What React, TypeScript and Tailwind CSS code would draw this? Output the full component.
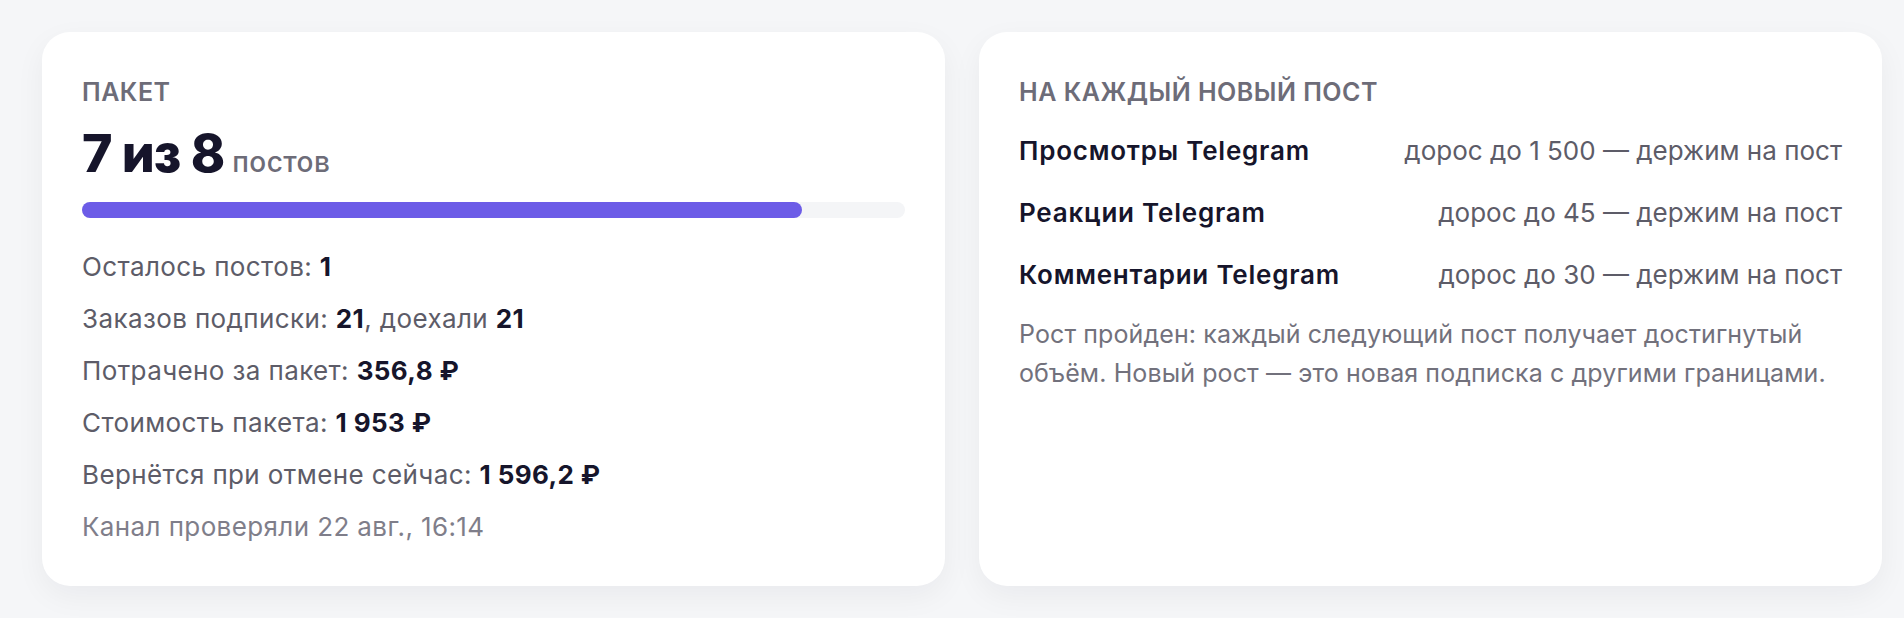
const stats = [
  { label: 'Осталось постов: ', value: '1' },
  { label: 'Заказов подписки: ', value: '21', extra: ', доехали ', extraValue: '21' },
  { label: 'Потрачено за пакет: ', value: '356,8 ₽' },
  { label: 'Стоимость пакета: ', value: '1 953 ₽' },
  { label: 'Вернётся при отмене сейчас: ', value: '1 596,2 ₽' },
]

const perPost = [
  { name: 'Просмотры Telegram', note: 'дорос до 1 500 — держим на пост' },
  { name: 'Реакции Telegram', note: 'дорос до 45 — держим на пост' },
  { name: 'Комментарии Telegram', note: 'дорос до 30 — держим на пост' },
]

export default function App() {
  const used = 7
  const total = 8

  return (
    <div
      className="min-h-[618px] bg-[#f5f6f8] pt-[32px] pl-[42px] pr-[22px] text-[#16152b]"
      style={{ fontFamily: 'Inter, "Noto Sans", sans-serif' }}
    >
      <div className="grid grid-cols-2 gap-[34px]">
        {/* Package card */}
        <div className="h-[554px] rounded-[28px] bg-white px-[40px] pt-[44px] shadow-[0_10px_30px_rgba(20,24,40,0.05)]">
          <div className="text-[25px] leading-[32px] font-semibold tracking-[0.02em] text-[#6d6c78]">ПАКЕТ</div>
          <div className="mt-[16px] flex items-baseline gap-[8px]">
            <span className="text-[52px] leading-[60px] font-extrabold tracking-[-0.02em]">
              {used} из {total}
            </span>
            <span className="text-[28px] font-medium tracking-[0.015em] text-[#6d6c78]">постов</span>
          </div>
          <div className="mt-[18px] h-[16px] rounded-full bg-[#f4f5f7]">
            <div
              className="h-full rounded-full bg-[#6c5ce7]"
              style={{ width: `${(used / total) * 100}%` }}
            />
          </div>
          <div className="mt-[29px] flex flex-col gap-[12px] text-[26px] leading-[40px] tracking-[0.015em] text-[#5d5c68]">
            {stats.map((s) => (
              <div key={s.label}>
                {s.label}
                <span className="font-bold text-[#16152b]">{s.value}</span>
                {s.extra}
                {s.extraValue && <span className="font-bold text-[#16152b]">{s.extraValue}</span>}
              </div>
            ))}
            <div className="text-[#7f7e8a]">Канал проверяли 22 авг., 16:14</div>
          </div>
        </div>

        {/* Per-post card */}
        <div className="h-[554px] rounded-[28px] bg-white px-[40px] pt-[44px] shadow-[0_10px_30px_rgba(20,24,40,0.05)]">
          <div className="text-[25px] leading-[32px] font-semibold tracking-[0.02em] text-[#6d6c78]">
            НА КАЖДЫЙ НОВЫЙ ПОСТ
          </div>
          <div className="mt-[23px] flex flex-col gap-[22px]">
            {perPost.map((p) => (
              <div key={p.name} className="flex items-baseline justify-between text-[26px] leading-[40px]">
                <span className="font-semibold tracking-[0.03em]">{p.name}</span>
                <span className="text-[#5d5c68]">{p.note}</span>
              </div>
            ))}
          </div>
          <p className="mt-[20px] text-[25px] leading-[39px] tracking-[0.004em] text-[#72717c]">
            Рост пройден: каждый следующий пост получает достигнутый объём. Новый рост — это новая подписка с
            другими границами.
          </p>
        </div>
      </div>
    </div>
  )
}
